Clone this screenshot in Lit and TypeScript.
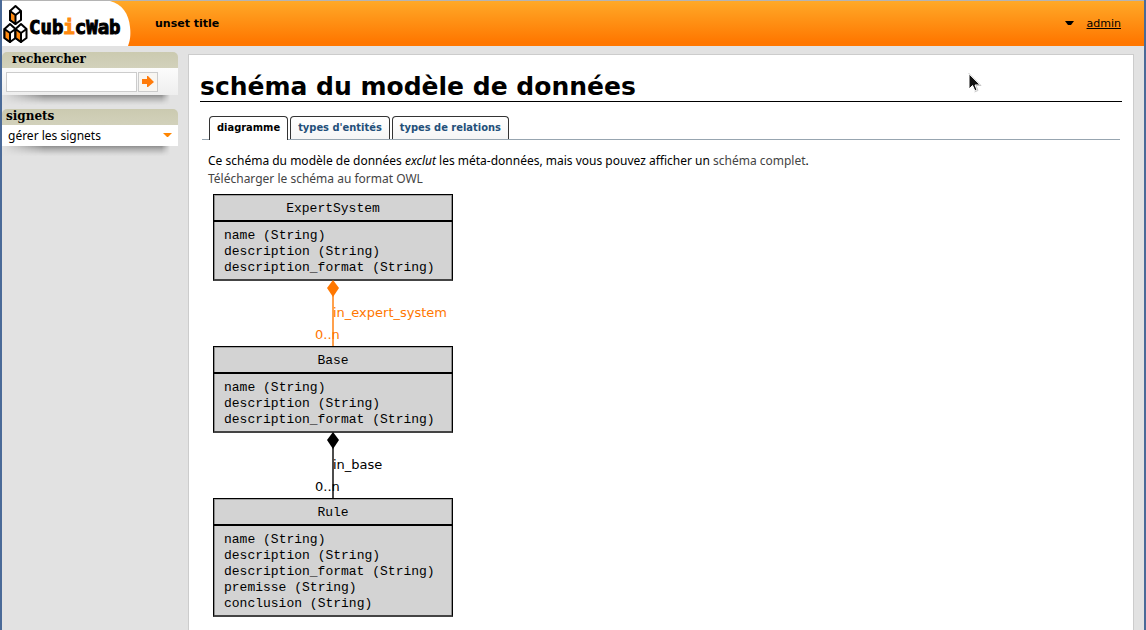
import { LitElement, html, css, svg } from "lit";
import { customElement, property } from "lit/decorators.js";

interface Attribute {
  name: string;
  type: string;
}

interface Entity {
  name: string;
  attributes: Attribute[];
}

const text = (name: string): Attribute => ({ name, type: "String" });

const common = [text("name"), text("description"), text("description_format")];

@customElement("cw-logo")
export class CwLogo extends LitElement {
  static styles = css`
    :host {
      display: block;
      flex: none;
      width: 132px;
      height: 45px;
    }
    .logo {
      display: block;
    }
    .word {
      font: bold 19px "DejaVu Sans Mono", monospace;
    }
  `;

  private cube(x: number, y: number) {
    return svg`
      <g transform="translate(${x} ${y})" stroke="#000" stroke-width="2" stroke-linejoin="round">
        <path d="M0 -9 L5.5 -4 V5 L0 9 L-5.5 5 V-4Z" fill="#fff" />
        <path d="M-5.5 -4 L0 0 V9 L-5.5 5Z" fill="#ff8a10" />
        <path d="M0 0 L5.5 -4" fill="none" />
      </g>`;
  }

  render() {
    return html`
      <svg class="logo" width="132" height="45" viewBox="0 0 132 45" role="img" aria-label="CubicWab">
        <path d="M0 0 H108 C120 3 127 13 128 26 C129 34 128 40 126 45 H0Z" fill="#fff" />
        ${this.cube(13.5, 14)} ${this.cube(8, 32)} ${this.cube(19, 32)}
        <text class="word" x="27" y="33" fill="#000" stroke="#000" stroke-width="1">Cub<tspan fill="#ff8a10" stroke="#ff8a10">i</tspan>cWab</text>
      </svg>
    `;
  }
}

@customElement("entity-node")
export class EntityNode extends LitElement {
  static styles = css`
    :host {
      display: block;
      box-sizing: border-box;
      border: 1px solid #000;
      border-bottom: 2px solid #444;
      background: #d3d3d3;
      box-shadow: inset 1px 0 #8c8c8c, inset -1px 0 #8c8c8c, inset 0 1px #a0a0a0;
      font: 13px/16px "Liberation Mono", "Courier New", monospace;
      color: #000;
    }
    .name {
      margin: 0;
      padding-top: 2px;
      font: inherit;
      line-height: 23px;
      text-align: center;
      border-bottom: 2px solid #000;
    }
    .attributes {
      list-style: none;
      margin: 0;
      padding: 6px 10px 3px;
      white-space: nowrap;
    }
  `;

  @property({ attribute: false }) entity!: Entity;

  render() {
    return html`
      <h3 class="name">${this.entity.name}</h3>
      <ul class="attributes">
        ${this.entity.attributes.map((a) => html`<li>${a.name} (${a.type})</li>`)}
      </ul>
    `;
  }
}

@customElement("relation-edge")
export class RelationEdge extends LitElement {
  static styles = css`
    :host {
      display: block;
      height: 65px;
    }
    .edge {
      display: block;
      width: 100%;
      height: 65px;
      overflow: visible;
      font: 13px "DejaVu Sans", Verdana, sans-serif;
    }
  `;

  @property() label = "";
  @property() cardinality = "";
  @property() color = "#000";

  render() {
    return html`
      <svg class="edge" viewBox="0 0 240 65" fill=${this.color}>
        <path d="M120 14 V65" stroke=${this.color} stroke-width="2" stroke-opacity="0.7" />
        <path d="M120 -1 L126 7 L120 16 L114 7Z" />
        <text x="120" y="36">${this.label}</text>
        <text x="102" y="58">${this.cardinality}</text>
      </svg>
    `;
  }
}

@customElement("side-box")
export class SideBox extends LitElement {
  static styles = css`
    :host {
      display: block;
    }
    .title {
      margin: 0;
      height: 16px;
      padding-left: var(--title-indent, 4px);
      border-radius: 5px 5px 0 0;
      background: linear-gradient(#cbcab0, #d2d1bb);
      font: bold 12px/15px "DejaVu Serif", Georgia, serif;
      color: #000;
    }
    .body {
      background: var(--body-fill, #fff);
    }
    .shade {
      height: 10px;
      margin-right: 8px;
      background: linear-gradient(#8f8f8f, #b4b4b4 35%, #d4d4d4 75%, transparent);
      -webkit-mask-image: linear-gradient(90deg, transparent, #000 25%, #000 95%, transparent);
      mask-image: linear-gradient(90deg, transparent, #000 25%, #000 95%, transparent);
    }
  `;

  @property() heading = "";

  render() {
    return html`
      <h2 class="title">${this.heading}</h2>
      <div class="body"><slot></slot></div>
      <div class="shade"></div>
    `;
  }
}

@customElement("app-root")
export class AppRoot extends LitElement {
  static styles = css`
    :host {
      display: flex;
      flex-direction: column;
      box-sizing: border-box;
      min-height: 100vh;
      border: 2px solid #4a6a98;
      border-width: 0 2px;
      background: #e2e2e2;
      color: #000;
      font: 11px/18px "DejaVu Sans", Verdana, sans-serif;
    }
    a {
      color: inherit;
      text-decoration: none;
    }
    .header {
      display: flex;
      align-items: center;
      height: 45px;
      border-top: 1px solid #b4b4b4;
      background: linear-gradient(#ffa928, #ff7700 92%);
    }
    .app-title {
      flex: 1;
      padding-left: 21px;
      font-weight: bold;
    }
    .user {
      display: flex;
      align-items: center;
      gap: 13px;
      padding-right: 23px;
    }
    .user a {
      text-decoration: underline;
    }
    .columns {
      flex: 1;
      display: flex;
      gap: 10px;
      padding-right: 10px;
    }
    .sidebar {
      flex: none;
      width: 176px;
      display: flex;
      flex-direction: column;
      gap: 4px;
      padding-top: 6px;
    }
    .search-box {
      --title-indent: 10px;
      --body-fill: linear-gradient(#fcfcfc, #eee);
    }
    .search {
      display: flex;
      gap: 1px;
      padding: 4px 4px 3px;
    }
    .query,
    .go {
      box-sizing: border-box;
      height: 20px;
      margin: 0;
      border: 1px solid #ccc;
      border-radius: 0;
      background: #fff;
    }
    .query {
      width: 131px;
      padding: 0 4px;
      font: inherit;
    }
    .go {
      width: 20px;
      padding: 0;
      background: #f8f6f2;
    }
    .go svg {
      display: block;
      margin: auto;
    }
    .bookmarks {
      box-sizing: border-box;
      width: 100%;
      display: flex;
      align-items: center;
      justify-content: space-between;
      height: 21px;
      padding: 0 6px;
      border: 0;
      background: none;
      color: inherit;
      font: 12px/18px "Noto Sans", "Open Sans", sans-serif;
    }
    .main {
      flex: 1;
      min-width: 0;
      margin-top: 8px;
      padding: 14px 11px 12px;
      border: 1px solid #ccc;
      border-bottom: 0;
      background: #fff;
    }
    .page-title {
      margin: 0;
      padding-top: 3px;
      border-bottom: 1px solid #000;
      font: bold 25px/29px "DejaVu Sans", Verdana, sans-serif;
    }
    .tabs {
      display: flex;
      gap: 2px;
      margin: 14px 2px 0;
      padding: 0 7px;
      border-bottom: 1px solid #97a5b0;
      font: bold 11px/22px "DejaVu Sans Condensed", "DejaVu Sans", sans-serif;
    }
    .tab {
      padding: 0 7px;
      border: 1px solid #333;
      border-bottom: 0;
      border-radius: 4px 4px 0 0;
      background: linear-gradient(#fff, #f5f5f5);
      color: #234f79;
    }
    .tab.current {
      margin-bottom: -1px;
      padding-bottom: 1px;
      background: #fff;
      color: #000;
    }
    .content {
      padding: 12px 8px 0;
      font: 12px/18px "Noto Sans", "Open Sans", sans-serif;
    }
    .intro {
      margin: 0;
    }
    .intro a {
      color: #444;
    }
    .schema {
      width: 240px;
      margin: 6px 5px 0;
    }
    .pointer {
      position: absolute;
      left: 968px;
      top: 73px;
    }
  `;

  private expert: Entity = { name: "ExpertSystem", attributes: common };
  private base: Entity = { name: "Base", attributes: common };
  private rule: Entity = {
    name: "Rule",
    attributes: [...common, text("premisse"), text("conclusion")],
  };

  render() {
    return html`
      <header class="header">
        <cw-logo></cw-logo>
        <span class="app-title">unset title</span>
        <div class="user">
          <svg width="9" height="5" viewBox="0 0 9 5" aria-hidden="true"><path d="M0 0 H9 L6 4 H3Z" /></svg>
          <a href="#admin">admin</a>
        </div>
      </header>
      <div class="columns">
        <aside class="sidebar">
          <side-box class="search-box" heading="rechercher">
            <form class="search" @submit=${(e: Event) => e.preventDefault()}>
              <input class="query" type="text" aria-label="rechercher" />
              <button class="go" aria-label="rechercher">
                <svg width="12" height="12" viewBox="0 0 12 12" fill="#ff7b0a">
                  <path d="M0 3 H5 V0 H6 L12 6 L6 11 H5 V8 H0Z" />
                </svg>
              </button>
            </form>
          </side-box>
          <side-box heading="signets">
            <button class="bookmarks">
              gérer les signets
              <svg width="9" height="5" viewBox="0 0 9 5" fill="#ff8500"><path d="M0 0 H9 L5 4 H4Z" /></svg>
            </button>
          </side-box>
        </aside>
        <main class="main">
          <h1 class="page-title">schéma du modèle de données</h1>
          <nav class="tabs">
            <a class="tab current" href="#diagramme" aria-current="page">diagramme</a>
            <a class="tab" href="#entites">types d'entités</a>
            <a class="tab" href="#relations">types de relations</a>
          </nav>
          <section class="content">
            <p class="intro">
              Ce schéma du modèle de données <em>exclut</em> les méta-données, mais vous pouvez afficher un
              <a href="#complet">schéma complet</a>.
            </p>
            <p class="intro"><a href="#owl">Télécharger le schéma au format OWL</a></p>
            <div class="schema">
              <entity-node .entity=${this.expert}></entity-node>
              <relation-edge label="in_expert_system" cardinality="0..n" color="#ff7700"></relation-edge>
              <entity-node .entity=${this.base}></entity-node>
              <relation-edge label="in_base" cardinality="0..n"></relation-edge>
              <entity-node .entity=${this.rule}></entity-node>
            </div>
          </section>
        </main>
      </div>
      <svg class="pointer" width="14" height="20" viewBox="0 0 14 20" aria-hidden="true">
        <path d="M1 1 V16 L4.5 12.5 L7 18 L9 17 L7 12 H12Z" fill="#111" stroke="#fff" />
        <path d="M0.5 0 L13 12.5 H8 L10 17.5 L6.5 19" fill="none" stroke="#bbb" stroke-width="0.8" />
      </svg>
    `;
  }
}
